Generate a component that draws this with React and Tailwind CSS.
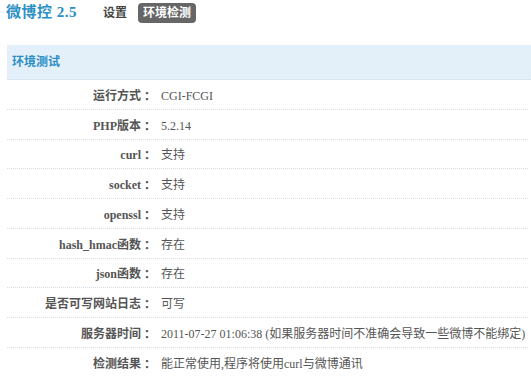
import React from "react";

const ROWS = [
  ["运行方式", "CGI-FCGI"],
  ["PHP版本", "5.2.14"],
  ["curl", "支持"],
  ["socket", "支持"],
  ["openssl", "支持"],
  ["hash_hmac函数", "存在"],
  ["json函数", "存在"],
  ["是否可写网站日志", "可写"],
  ["服务器时间", "2011-07-27 01:06:38 (如果服务器时间不准确会导致一些微博不能绑定)"],
  ["检测结果", "能正常使用,程序将使用curl与微博通讯"],
];

export default function App() {
  return (
    <div
      className="w-[531px] h-[382px] bg-white overflow-hidden text-[12px] text-[#555]"
      style={{ fontFamily: '"Liberation Serif", "Noto Sans CJK SC", serif' }}
    >
      <div className="flex items-center h-[25px] pl-[6px]">
        <div className="text-[15px] font-bold text-[#2a8fc4] tracking-[0.5px]">微博控 2.5</div>
        <div className="ml-[26px] font-bold text-[#444]">设置</div>
        <div className="ml-[11px] bg-[#666] text-white font-bold rounded-[4px] px-[5px] h-[20px] leading-[20px]">
          环境检测
        </div>
      </div>

      <div className="mt-[20px] ml-[7px]">
        <div className="h-[35px] bg-[#e4f0f9] pl-[5px] flex items-center font-bold text-[#2a8fc4] border-b border-dotted border-[#cfe1ef]">
          环境测试
        </div>
        {ROWS.map(([label, value], i) => (
          <div
            key={label}
            className={
              "flex items-center h-[29.75px] pt-[3px] mr-[3px] " +
              (i < ROWS.length - 1 ? "border-b border-dotted border-[#d6dde3]" : "")
            }
          >
            <div className="w-[134px] text-right font-bold text-[#555] whitespace-nowrap">{label}</div>
            <div className="w-[12px] text-center font-bold text-[#555] font-['Noto_Sans_CJK_TC',sans-serif]">：</div>
            <div className="ml-[8px] text-[#555] whitespace-nowrap">{value}</div>
          </div>
        ))}
      </div>
    </div>
  );
}
